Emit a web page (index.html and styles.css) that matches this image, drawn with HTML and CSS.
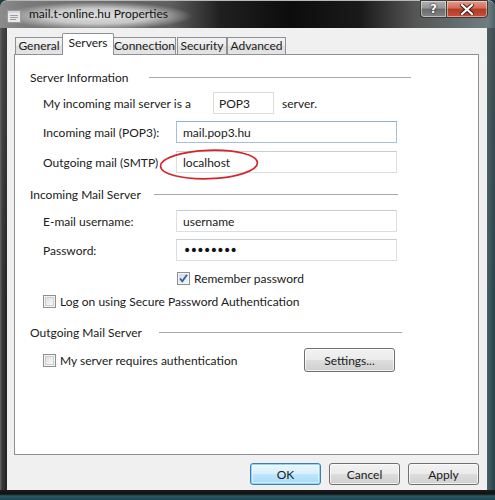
FILE: index.html
```html
<!DOCTYPE html>
<html>
<head>
<meta charset="utf-8">
<link rel="stylesheet" href="styles.css">
</head>
<body>
<div class="window">
  <div class="titlebar">
    <svg class="app-icon" width="16" height="15" viewBox="0 0 16 15">
      <rect x="0.5" y="1.5" width="13" height="12" fill="#e8e8e8" stroke="#9a9a9a"/>
      <rect x="1" y="2" width="12" height="2" fill="#cfd6dc"/>
      <line x1="3" y1="6.5" x2="11" y2="6.5" stroke="#9aa0a6"/>
      <line x1="3" y1="8.5" x2="11" y2="8.5" stroke="#9aa0a6"/>
      <line x1="3" y1="10.5" x2="9" y2="10.5" stroke="#9aa0a6"/>
    </svg>
    <span class="title">mail.t-online.hu Properties</span>
    <div class="caption">
      <div class="cap-btn help">?</div>
      <div class="cap-btn close">
        <svg width="14" height="11" viewBox="0 0 14 11">
          <path d="M2 1 L12 10 M12 1 L2 10" stroke="#3a1a14" stroke-width="4" stroke-linecap="square"/>
          <path d="M2 1 L12 10 M12 1 L2 10" stroke="#ffffff" stroke-width="2.2" stroke-linecap="square"/>
        </svg>
      </div>
    </div>
  </div>
  <div class="client">
    <div class="tabs">
      <div class="tab t-general">General</div>
      <div class="tab t-servers active">Servers</div>
      <div class="tab t-connection">Connection</div>
      <div class="tab t-security">Security</div>
      <div class="tab t-advanced">Advanced</div>
    </div>
    <div class="panel">
      <div class="group-head gh1"><span class="gh-text">Server Information</span><div class="rule rule1"></div></div>

      <div class="row row-pop">
        <span class="lbl lbl-wide">My incoming mail server is a</span>
        <div class="static-box">POP3</div>
        <span class="after">server.</span>
      </div>

      <div class="row row-in">
        <span class="lbl">Incoming mail (POP3):</span>
        <div class="field field-hover">mail.pop3.hu</div>
      </div>

      <div class="row row-out">
        <span class="lbl">Outgoing mail (SMTP)</span>
        <div class="field">localhost</div>
        <svg class="circle" width="104" height="34" viewBox="0 0 104 34">
          <ellipse cx="51" cy="16.5" rx="48.5" ry="14.2" fill="none" stroke="#d3272c" stroke-width="1.7" transform="rotate(-2 51 16.5)"/>
        </svg>
      </div>

      <div class="group-head gh2"><span class="gh-text">Incoming Mail Server</span><div class="rule rule2"></div></div>

      <div class="row row-user">
        <span class="lbl">E-mail username:</span>
        <div class="field">username</div>
      </div>

      <div class="row row-pass">
        <span class="lbl">Password:</span>
        <div class="field pass">••••••••</div>
      </div>

      <div class="check-row row-remember">
        <span class="checkbox checked">
          <svg width="11" height="11" viewBox="0 0 11 11"><path d="M2 5.5 L4.3 8.3 L9 1.8" fill="none" stroke="#3d5a9c" stroke-width="1.8"/></svg>
        </span>
        <span class="ck-text">Remember password</span>
      </div>

      <div class="check-row row-spa">
        <span class="checkbox"></span>
        <span class="ck-text">Log on using Secure Password Authentication</span>
      </div>

      <div class="group-head gh3"><span class="gh-text">Outgoing Mail Server</span><div class="rule rule3"></div></div>

      <div class="auth-row">
        <div class="check-row">
          <span class="checkbox"></span>
          <span class="ck-text">My server requires authentication</span>
        </div>
        <div class="button settings">Settings...</div>
      </div>
    </div>
    <div class="buttons">
      <div class="button default">OK</div>
      <div class="button">Cancel</div>
      <div class="button">Apply</div>
    </div>
  </div>
  <div class="bottom-frame"></div>
</div>
</body>
</html>
```

FILE: styles.css
```css
* { box-sizing: border-box; }
html, body { margin: 0; padding: 0; }
body {
  width: 495px;
  height: 500px;
  overflow: hidden;
  background: #1d3c44;
  font-family: Lato, "Liberation Sans", sans-serif;
  font-size: 12px;
  color: #202020;
}
.window {
  width: 495px;
  height: 500px;
  display: flex;
  flex-direction: column;
  border-radius: 7px 7px 0 0;
  overflow: hidden;
  background:
    linear-gradient(180deg, rgba(90,90,90,0.5) 0, rgba(0,0,0,0) 60%),
    linear-gradient(90deg, #6a6a6a 0, #3a3a3a 2px, #262626 6px, #222 50%, #1d1d1d 96%, #4f6a70 98%, #274048 100%);
}
.titlebar {
  height: 28px;
  flex: none;
  display: flex;
  align-items: flex-start;
  position: relative;
  background:
    radial-gradient(ellipse 95px 14px at 98px 15px, rgba(232,232,232,0.95) 0, rgba(215,215,215,0.85) 55%, rgba(200,200,200,0) 100%),
    linear-gradient(90deg, #8c8c8c 0, #7a7a7a 25px, #5f5f5f 170px, #202020 220px, #0c0c0c 290px, #1a1a1a 360px, #555 415px, #6f7d80 488px, #4b6166 495px);
  border-top: 1px solid #b8b8b8;
  border-radius: 7px 7px 0 0;
}
.app-icon {
  margin: 8px 0 0 7px;
  flex: none;
}
.title {
  margin: 5px 0 0 6px;
  font-size: 12px;
  color: #111;
  line-height: 16px;
}
.caption {
  margin-left: auto;
  margin-right: 7px;
  display: flex;
  margin-top: -1px;
}
.cap-btn {
  height: 18px;
  display: flex;
  align-items: center;
  justify-content: center;
  border: 1px solid #3a3a3a;
  box-shadow: inset 0 0 0 1px rgba(255,255,255,0.45);
}
.help {
  width: 26px;
  border-radius: 0 0 0 4px;
  background: linear-gradient(180deg, #b0b0b0 0, #949494 45%, #6a6a6a 50%, #858585 100%);
  color: #fff;
  font-family: "DejaVu Sans", sans-serif;
  font-weight: bold;
  font-size: 12px;
  text-shadow: 0 0 2px #222, 0 0 1px #000;
  border-right: none;
}
.close {
  width: 42px;
  border-radius: 0 0 4px 0;
  background: linear-gradient(180deg, #e89a8a 0, #d06a58 45%, #b03a24 50%, #c8503a 100%);
}
.client {
  margin: 0 8px 0 7px;
  height: 462px;
  flex: none;
  background: #f0f0f0;
  padding: 5px 8px 0 7px;
  display: flex;
  flex-direction: column;
}
.tabs {
  display: flex;
  align-items: flex-end;
  height: 21px;
  padding-left: 1px;
  position: relative;
  z-index: 2;
}
.tab {
  height: 17px;
  border: 1px solid #8e9097;
  border-bottom: none;
  background: linear-gradient(180deg, #f3f3f3 0, #ebebeb 50%, #dedede 51%, #e4e4e4 100%);
  display: flex;
  align-items: center;
  justify-content: center;
  margin-left: -1px;
  color: #202020;
  line-height: 14px;
}
.tab.active {
  height: 22px;
  background: #fff;
  margin-bottom: -1px;
  position: relative;
  z-index: 3;
  padding-bottom: 4px;
  border-radius: 2px 2px 0 0;
}
.t-general { width: 48px; margin-left: 0; }
.t-servers { width: 52px; }
.t-connection { width: 63px; }
.t-security { width: 50px; margin-left: 1px; }
.t-advanced { width: 59px; margin-left: 0; }
.panel {
  height: 401px;
  flex: none;
  background: #fff;
  border: 1px solid #8e9097;
  padding: 14px 0 0 15px;
  position: relative;
}
.group-head {
  display: flex;
  align-items: center;
  height: 16px;
}
.gh-text { white-space: nowrap; }
.rule {
  height: 1px;
  background: #a9a9a9;
  flex: none;
}
.rule1 { margin-left: auto; width: 262px; margin-right: 67px; }
.rule2 { margin-left: auto; width: 244px; margin-right: 80px; }
.rule3 { margin-left: auto; width: 243px; margin-right: 76px; }
.gh1 { margin-top: 0; }
.gh2 { margin-top: 13px; }
.gh3 { margin-top: 15px; }
.row {
  display: flex;
  align-items: center;
  height: 22px;
  padding-left: 13px;
  position: relative;
}
.row-pop { margin-top: 7px; }
.row-in { margin-top: 7px; }
.row-out { margin-top: 8px; }
.row-user { margin-top: 8px; }
.row-pass { margin-top: 7px; }
.lbl {
  width: 133px;
  flex: none;
  white-space: nowrap;
}
.lbl-wide { width: 170px; }
.static-box {
  width: 61px;
  height: 22px;
  border: 1px solid #dcdcdc;
  padding-left: 5px;
  display: flex;
  align-items: center;
}
.after { margin-left: 8px; }
.field {
  width: 221px;
  height: 22px;
  border: 1px solid #dadfe4;
  border-top-color: #c8ccd1;
  padding-left: 6px;
  display: flex;
  align-items: center;
}
.field-hover {
  border-color: #a6c0d8;
  border-top-color: #8fb0cf;
}
.pass {
  font-family: "DejaVu Sans", sans-serif;
  font-size: 14px;
  letter-spacing: -1.6px;
  padding-bottom: 1px;
  color: #111;
}
.circle {
  position: absolute;
  left: 128px;
  top: -3px;
}
.check-row {
  display: flex;
  align-items: center;
  height: 16px;
}
.row-remember { margin-top: 9px; padding-left: 147px; }
.row-spa { margin-top: 7px; padding-left: 13px; }
.checkbox {
  width: 13px;
  height: 13px;
  border: 1px solid #8f8f8f;
  background: linear-gradient(135deg, #d8d8d8 0, #f0f0f0 60%, #fbfbfb 100%);
  box-shadow: inset 0 0 0 1px #f4f4f4, inset 0 0 0 2px #cfcfcf;
  flex: none;
  display: flex;
  align-items: center;
  justify-content: center;
}
.checkbox.checked {
  background: linear-gradient(135deg, #c9d6ea 0, #e6edf7 60%, #f4f7fb 100%);
  box-shadow: inset 0 0 0 1px #f4f4f4;
}
.ck-text { margin-left: 4px; white-space: nowrap; }
.auth-row {
  display: flex;
  align-items: center;
  margin-top: 8px;
  height: 24px;
  padding-left: 13px;
}
.button {
  height: 22px;
  width: 71px;
  border: 1px solid #707070;
  border-radius: 3px;
  background: linear-gradient(180deg, #f2f2f2 0, #ebebeb 48%, #dddddd 52%, #cfcfcf 100%);
  box-shadow: inset 0 0 0 1px rgba(255,255,255,0.7);
  display: flex;
  align-items: center;
  justify-content: center;
  color: #202020;
}
.settings {
  width: 91px;
  height: 24px;
  margin-left: auto;
  margin-right: 83px;
}
.buttons {
  display: flex;
  justify-content: flex-end;
  gap: 8px;
  margin-top: 8px;
}
.button.default {
  border-color: #3c7fb1;
  box-shadow: inset 0 0 0 1px #8fd6f5, inset 0 0 0 2px rgba(255,255,255,0.5);
  background: linear-gradient(180deg, #eaf6fd 0, #d9f0fc 48%, #bee6fd 52%, #a7d9f5 100%);
}
.bottom-frame {
  flex: 1;
  background: linear-gradient(180deg, #1a1a1a 0, #111 40%, #2a5a66 60%, #1c4550 100%);
}
```
